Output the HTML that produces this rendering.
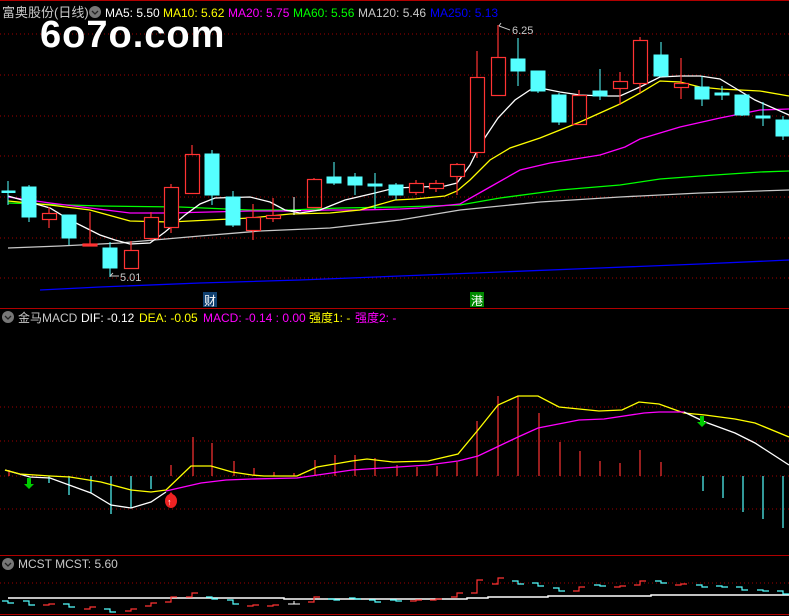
<!DOCTYPE html>
<html><head><meta charset="utf-8"><style>
body{margin:0;background:#000;width:789px;height:616px;overflow:hidden}
svg{display:block}
text{font-family:"Liberation Sans","Noto Sans CJK SC",sans-serif}
</style></head><body>
<svg width="789" height="616" viewBox="0 0 789 616" xmlns="http://www.w3.org/2000/svg">
<rect width="789" height="616" fill="#000"/>
<line x1="0" y1="0.5" x2="789" y2="0.5" stroke="#b00000"/>
<g stroke="#a00000" stroke-dasharray="1,3">
<line x1="0" x2="789" y1="34" y2="34"/><line x1="0" x2="789" y1="75" y2="75"/><line x1="0" x2="789" y1="116" y2="116"/><line x1="0" x2="789" y1="156" y2="156"/><line x1="0" x2="789" y1="197" y2="197"/><line x1="0" x2="789" y1="238" y2="238"/><line x1="0" x2="789" y1="278" y2="278"/>
<line x1="0" x2="789" y1="407" y2="407"/><line x1="0" x2="789" y1="441" y2="441"/><line x1="0" x2="789" y1="476" y2="476"/><line x1="0" x2="789" y1="509" y2="509"/>
<line x1="0" x2="789" y1="583" y2="583"/>
</g>
<line x1="0" y1="308.5" x2="789" y2="308.5" stroke="#b00000"/>
<line x1="0" y1="555.5" x2="789" y2="555.5" stroke="#b00000"/>
<line x1="0" y1="614.5" x2="789" y2="614.5" stroke="#b00000"/>

<text x="2" y="17" font-size="13" fill="#c8c8c8">富奥股份(日线)</text>
<circle cx="95" cy="12" r="6" fill="#777"/><path d="M92 11 L95 14 L98 11" stroke="#222" fill="none" stroke-width="1.3"/>
<text x="105" y="17" font-size="12" fill="#fff">MA5: 5.50</text>
<text x="163" y="17" font-size="12" fill="#ff0">MA10: 5.62</text>
<text x="228" y="17" font-size="12" fill="#f0f">MA20: 5.75</text>
<text x="293" y="17" font-size="12" fill="#0f0">MA60: 5.56</text>
<text x="358" y="17" font-size="12" fill="#c8c8c8">MA120: 5.46</text>
<text x="430" y="17" font-size="12" fill="#00f">MA250: 5.13</text>
<text x="40" y="47" font-size="38" font-weight="bold" letter-spacing="1" fill="#fff">6o7o.com</text>

<g fill="none" stroke-width="1.3">
<polyline stroke="#00f" points="40,290 100,287 200,283 300,280 400,276 500,272 600,268 700,264 789,260"/>
<polyline stroke="#c8c8c8" points="8,248 60,246 120,243 200,236 260,231 330,228 400,220 460,210 540,202 620,197 700,193 789,190"/>
<polyline stroke="#0f0" points="8,203 100,206 180,207 250,210 290,210 340,208 400,207 460,205 500,198 560,190 620,185 660,179 700,176 760,172 789,171"/>
<polyline stroke="#f0f" points="8,197 50,203 90,208 130,213 170,213 210,212 250,211 290,211 330,210 360,210 400,209 420,208 460,204 490,187 520,170 550,163 600,155 625,147 640,139 680,127 720,118 760,110 789,109"/>
<polyline stroke="#ff0" points="8,201 50,205 90,210 130,221 170,222 210,220 250,218 290,214 330,213 360,210 395,200 415,199 445,196 457,191 470,180 490,160 510,148 540,138 560,130 580,122 620,104 640,93 660,81 680,82 700,87 720,89 740,90 760,91 789,96"/>
<polyline stroke="#fff" points="8,196 50,208 70,220 100,235 115,240 130,244 150,243 165,232 185,215 200,204 215,198 250,197 270,202 285,210 300,213 320,210 330,206 345,200 375,193 395,188 420,187 445,186 457,183 470,165 480,145 498,118 515,100 530,90 540,88 560,92 580,95 605,96 620,96 640,87 660,77 680,76 700,76 720,79 735,88 755,100 789,115"/>
</g>

<g stroke="#5ff" fill="#5ff">
<line x1="8" y1="181" x2="8" y2="205"/><rect x="2" y="191" width="13" height="1.5"/>
<line x1="29" y1="185" x2="29" y2="222"/><rect x="22" y="187" width="14" height="30"/>
<line x1="69" y1="215" x2="69" y2="245"/><rect x="62" y="215" width="14" height="23"/>
<line x1="110" y1="242" x2="110" y2="277"/><rect x="103" y="248" width="14" height="20"/>
<line x1="212" y1="150" x2="212" y2="205"/><rect x="205" y="154" width="14" height="41"/>
<line x1="233" y1="191" x2="233" y2="227"/><rect x="226" y="197" width="14" height="28"/>
<line x1="334" y1="162" x2="334" y2="185"/><rect x="327" y="177" width="14" height="6"/>
<line x1="355" y1="173" x2="355" y2="195"/><rect x="348" y="177" width="14" height="8"/>
<line x1="375" y1="173" x2="375" y2="209"/><rect x="368" y="184" width="14" height="2"/>
<line x1="396" y1="183" x2="396" y2="200"/><rect x="389" y="185" width="14" height="10"/>
<line x1="518" y1="38" x2="518" y2="86"/><rect x="511" y="59" width="14" height="12"/>
<line x1="538" y1="71" x2="538" y2="93"/><rect x="531" y="71" width="14" height="20"/>
<line x1="559" y1="93" x2="559" y2="125"/><rect x="552" y="95" width="14" height="27"/>
<line x1="600" y1="69" x2="600" y2="100"/><rect x="593" y="91" width="14" height="5"/>
<line x1="661" y1="42" x2="661" y2="77"/><rect x="654" y="55" width="14" height="21"/>
<line x1="702" y1="76" x2="702" y2="106"/><rect x="695" y="87" width="14" height="12"/>
<line x1="722" y1="86" x2="722" y2="100"/><rect x="715" y="93" width="14" height="2"/>
<line x1="742" y1="95" x2="742" y2="116"/><rect x="735" y="95" width="14" height="20"/>
<line x1="763" y1="102" x2="763" y2="126"/><rect x="756" y="116" width="14" height="2"/>
<line x1="783" y1="116" x2="783" y2="140"/><rect x="776" y="120" width="14" height="16"/>
</g>
<line x1="294" y1="197" x2="294" y2="215" stroke="#fff"/><line x1="287" y1="210.5" x2="301" y2="210.5" stroke="#fff"/>
<g stroke="#f33" fill="none" stroke-width="1.2">
<line x1="49" y1="207" x2="49" y2="228"/><rect x="42.5" y="213.5" width="14" height="6" fill="#000"/>
<line x1="90" y1="212" x2="90" y2="246"/><rect x="83" y="244" width="14" height="2" fill="#f33"/>
<line x1="131" y1="241" x2="131" y2="250"/><rect x="124.5" y="250.5" width="14" height="18"/>
<line x1="151" y1="212" x2="151" y2="240"/><rect x="144.5" y="217.5" width="14" height="21" fill="#000"/>
<line x1="171" y1="184" x2="171" y2="233"/><rect x="164.5" y="187.5" width="14" height="40" fill="#000"/>
<line x1="192" y1="145" x2="192" y2="154"/><rect x="185.5" y="154.5" width="14" height="39"/>
<line x1="253" y1="204" x2="253" y2="240"/><rect x="246.5" y="217.5" width="14" height="13" fill="#000"/>
<line x1="273" y1="198" x2="273" y2="222"/><rect x="266.5" y="215.5" width="14" height="3" fill="#000"/>
<line x1="314" y1="178" x2="314" y2="179"/><rect x="307.5" y="179.5" width="14" height="28"/>
<line x1="416" y1="180" x2="416" y2="195"/><rect x="409.5" y="183.5" width="14" height="9" fill="#000"/>
<line x1="436" y1="180" x2="436" y2="192"/><rect x="429.5" y="183.5" width="14" height="5" fill="#000"/>
<line x1="457" y1="163" x2="457" y2="195"/><rect x="450.5" y="164.5" width="14" height="12" fill="#000"/>
<line x1="477" y1="51" x2="477" y2="158"/><rect x="470.5" y="77.5" width="14" height="75" fill="#000"/>
<line x1="498" y1="25" x2="498" y2="57"/><rect x="491.5" y="57.5" width="14" height="38"/>
<line x1="579" y1="90" x2="579" y2="95"/><rect x="572.5" y="95.5" width="14" height="29"/>
<line x1="620" y1="72" x2="620" y2="105"/><rect x="613.5" y="81.5" width="14" height="7" fill="#000"/>
<line x1="640" y1="37" x2="640" y2="93"/><rect x="633.5" y="40.5" width="14" height="43" fill="#000"/>
<line x1="681" y1="58" x2="681" y2="99"/><rect x="674.5" y="83.5" width="14" height="4" fill="#000"/>
</g>
<text x="120" y="281" font-size="11" fill="#c8c8c8">5.01</text><path d="M110 276 L119 276 M110 276 L113 273" stroke="#c8c8c8" fill="none"/>
<text x="512" y="34" font-size="11" fill="#c8c8c8">6.25</text><path d="M499 26 L510 30 M499 26 L501 23" stroke="#c8c8c8" fill="none"/>
<rect x="203" y="292" width="14" height="15" fill="#104070"/><text x="204" y="305" font-size="12" fill="#fff">财</text>
<rect x="470" y="292" width="14" height="15" fill="#080"/><text x="471" y="305" font-size="12" fill="#fff">港</text>

<circle cx="8" cy="317" r="6" fill="#777"/><path d="M5 316 L8 319 L11 316" stroke="#222" fill="none" stroke-width="1.3"/>
<text x="18" y="322" font-size="12" fill="#c8c8c8">金马MACD</text>
<text x="81" y="322" font-size="12" fill="#fff">DIF: -0.12</text>
<text x="139" y="322" font-size="12" fill="#ff0">DEA: -0.05</text>
<text x="203" y="322" font-size="12" fill="#f0f">MACD: -0.14 : 0.00</text>
<text x="309" y="322" font-size="12" fill="#ff0">强度1: -</text>
<text x="355" y="322" font-size="12" fill="#f0f">强度2: -</text>

<g stroke="#f33" stroke-width="1.2">
<line x1="9" y1="470" x2="9" y2="476"/>
<line x1="171" y1="465" x2="171" y2="476"/><line x1="193" y1="437" x2="193" y2="476"/><line x1="212" y1="443" x2="212" y2="476"/><line x1="234" y1="461" x2="234" y2="476"/><line x1="254" y1="468" x2="254" y2="476"/><line x1="274" y1="472" x2="274" y2="476"/><line x1="294" y1="473" x2="294" y2="476"/><line x1="315" y1="460" x2="315" y2="476"/><line x1="335" y1="455" x2="335" y2="476"/><line x1="355" y1="455" x2="355" y2="476"/><line x1="375" y1="458" x2="375" y2="476"/><line x1="397" y1="465" x2="397" y2="476"/><line x1="417" y1="467" x2="417" y2="476"/><line x1="437" y1="466" x2="437" y2="476"/><line x1="457" y1="462" x2="457" y2="476"/><line x1="477" y1="421" x2="477" y2="476"/><line x1="498" y1="396" x2="498" y2="476"/><line x1="518" y1="396" x2="518" y2="476"/><line x1="539" y1="413" x2="539" y2="476"/><line x1="560" y1="442" x2="560" y2="476"/><line x1="580" y1="451" x2="580" y2="476"/><line x1="600" y1="461" x2="600" y2="476"/><line x1="620" y1="463" x2="620" y2="476"/><line x1="640" y1="450" x2="640" y2="476"/><line x1="661" y1="462" x2="661" y2="476"/>
</g>
<g stroke="#5ff" stroke-width="1.2">
<line x1="49" y1="476" x2="49" y2="483"/><line x1="69" y1="476" x2="69" y2="495"/><line x1="91" y1="476" x2="91" y2="493"/><line x1="111" y1="476" x2="111" y2="514"/><line x1="131" y1="476" x2="131" y2="508"/><line x1="151" y1="476" x2="151" y2="489"/>
<line x1="703" y1="476" x2="703" y2="491"/><line x1="723" y1="476" x2="723" y2="498"/><line x1="743" y1="476" x2="743" y2="512"/><line x1="763" y1="476" x2="763" y2="519"/><line x1="783" y1="476" x2="783" y2="528"/>
</g>
<g fill="none" stroke-width="1.3">
<polyline stroke="#fff" points="5,470 30,477 50,478 91,493 111,505 131,508 151,502 166,492"/>
<polyline stroke="#ff0" points="5,470 20,474 50,476 70,477 101,482 131,490 151,492 166,490 191,466 211,466 232,472 252,475 264,476 297,476 317,467 352,461 367,459 393,462 428,461 458,454 478,430 498,405 518,396 538,396 559,407 599,411 622,410 639,402 659,404 684,413 705,415 735,419 755,423 789,437"/>
<polyline stroke="#f0f" points="166,491 201,483 226,480 252,479 297,478 352,470 428,465 458,461 478,456 518,437 538,428 579,420 604,419 644,413 659,412 684,412"/>
<polyline stroke="#fff" points="684,412 705,422 735,433 755,443 789,465"/>
</g>
<path d="M27 478 L31 478 L31 484 L34 484 L29 489 L24 484 L27 484Z" fill="#0c0"/>
<path d="M700 416 L704 416 L704 422 L707 422 L702 427 L697 422 L700 422Z" fill="#0c0"/>
<ellipse cx="171" cy="501" rx="6" ry="7" fill="#e22"/><path d="M171 492 L175 497 L167 497Z" fill="#e22"/><text x="167" y="505" font-size="9" fill="#fff">↑</text>

<circle cx="8" cy="564" r="6" fill="#777"/><path d="M5 563 L8 566 L11 563" stroke="#222" fill="none" stroke-width="1.3"/>
<text x="18" y="568" font-size="12" fill="#c8c8c8">MCST  MCST: 5.60</text>
<g fill="none" stroke="#fff" stroke-width="1.5">
<polyline points="8,598 284,598 284,599 467,599 467,598 488,598 488,597 548,597 548,596 651,596 651,595 789,595"/>
</g>
<g fill="none" stroke-width="1.2" stroke="#5ff">
<path d="M2 601h6v2h6M23 601h6v4h6M63 604h6v3h6M104 609h6v3h6M206 597h6v2h6M227 600h6v4h6M328 599h6v1h6M349 598h6v1h6M369 600h6v2h6M390 600h6v1h6M512 581h6v3h6M532 583h6v3h6M553 588h6v3h6M594 585h6v1h6M655 581h6v2h6M696 585h6v2h6M716 586h6v1h6M736 587h6v3h6M757 590h6v1h6M777 591h6v3h6"/>
</g>
<g fill="none" stroke-width="1.2" stroke="#f33">
<path d="M43 605h6v-1h6M84 609h6v-2h6M125 611h6v-2h6M145 606h6v-3h6M165 602h6v-5h6M186 597h6v-4h6M247 606h6v-1h6M267 606h6v-1h6M308 602h6v-5h6M410 601h6v-1h6M430 600h6v-1h6M451 597h6v-4h6M471 593h6v-13h6M492 584h6v-6h6M573 591h6v-4h6M614 587h6v-1h6M634 585h6v-4h6M675 585h6v-1h6"/>
</g>
<path d="M288 604h12M294 604v-3" stroke="#fff" fill="none"/>
</svg>
</body></html>
